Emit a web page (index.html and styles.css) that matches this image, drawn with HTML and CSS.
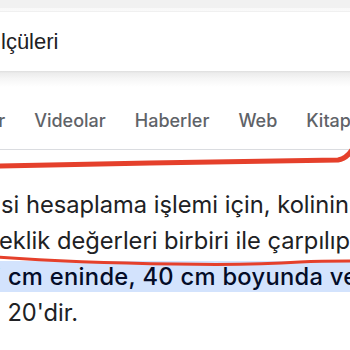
FILE: index.html
```html
<!DOCTYPE html>
<html lang="tr">
<head>
<meta charset="utf-8">
<link rel="stylesheet" href="styles.css">
</head>
<body>
<div class="page">
  <div class="top-strip"></div>
  <div class="search">
    <span class="query">lçüleri</span>
  </div>
  <div class="search-shadow"></div>
  <nav class="tabs">
    <span class="tab first">Görseller</span>
    <span class="tab">Videolar</span>
    <span class="tab">Haberler</span>
    <span class="tab">Web</span>
    <span class="tab">Kitaplar</span>
  </nav>
  <div class="divider"></div>
  <div class="snippet">
    <div class="line l1">si hesaplama işlemi için, kolinin</div>
    <div class="line l2">eklik değerleri birbiri ile çarpılıp</div>
    <div class="line l3 hl"><span class="cut">i</span> cm eninde, 40 cm boyunda ve</div>
    <div class="line l4"><span class="cut">i</span> 20'dir.</div>
  </div>
  <svg class="marks" width="350" height="350" viewBox="0 0 350 350">
    <path d="M-2 166 C 100 164, 250 161, 338 160 C 344 159, 348 156, 352 150" fill="none" stroke="#e5402b" stroke-width="5" stroke-linecap="round"/>
    <path d="M-2 257 C 40 260, 110 263, 175 264 C 230 265, 270 264, 300 262 C 320 261, 340 261, 352 261" fill="none" stroke="#e5402b" stroke-width="3" stroke-linecap="round"/>
  </svg>
</div>
</body>
</html>
```
FILE: styles.css
```css
html, body {
  margin: 0;
  padding: 0;
  background: #ffffff;
}
.page {
  position: relative;
  width: 350px;
  height: 350px;
  overflow: hidden;
  background: #ffffff;
}
.top-strip {
  height: 12px;
  background: linear-gradient(#f1f1f1 0, #f1f1f1 8px, #f8f8f8 8px, #fafafa 12px);
}
.search {
  height: 59px;
  background: #ffffff;
  display: flex;
  align-items: center;
  box-shadow: 0 -1px 0 #f0f0f0;
}
.query {
  font-family: "Liberation Sans", Arial, sans-serif;
  font-size: 22px;
  color: #202124;
  padding-left: 1px;
  margin-top: 1px;
}
.search-shadow {
  height: 16px;
  background: linear-gradient(#dedede 0, #ececec 2px, #f6f6f6 8px, #ffffff 16px);
}
.tabs {
  display: flex;
  gap: 29px;
  height: 62px;
  align-items: center;
  white-space: nowrap;
  font-family: Inter, Roboto, sans-serif;
  font-size: 18px;
  font-weight: 500;
  color: #5f6368;
  padding-top: 5px;
  box-sizing: border-box;
}
.tab.first {
  margin-left: -73px;
}
.divider {
  height: 1px;
  background: #dadce0;
}
.snippet {
  padding-top: 37px;
  font-family: Inter, Roboto, sans-serif;
  font-size: 23.7px;
  color: #202124;
}
.line {
  height: 36px;
  line-height: 36px;
  white-space: nowrap;
}
.l1 { margin-left: 1px; }
.l2 { margin-left: -1px; }
.l3 {
  height: 31px;
  line-height: 31px;
  margin-top: 2px;
  margin-bottom: 3px;
}
.hl {
  background: #d3e3fd;
  color: #040c28;
  font-weight: 500;
  letter-spacing: 0.3px;
}
.cut {
  display: inline-block;
  margin-left: -5px;
}
.marks {
  position: absolute;
  left: 0;
  top: 0;
  pointer-events: none;
}
```
